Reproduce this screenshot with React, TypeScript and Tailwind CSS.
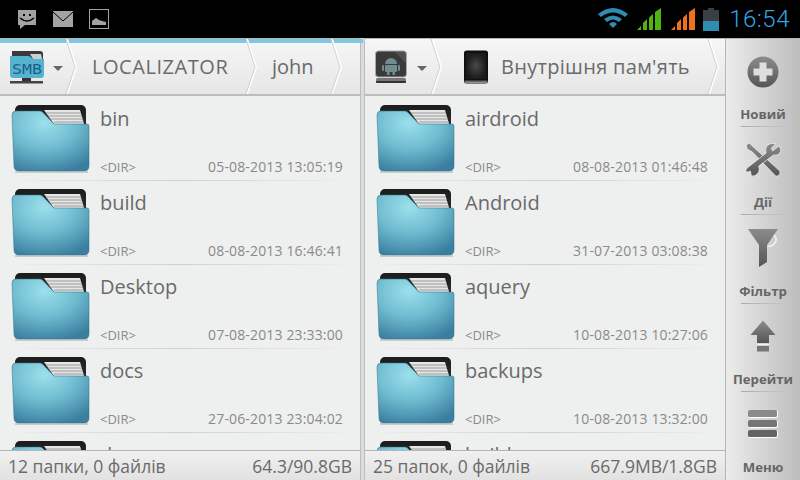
function Folder() {
  return (
    <svg width="80" height="72" viewBox="0 0 80 72" className="shrink-0">
      <defs>
        <linearGradient id="fback" x1="0" y1="0" x2="0" y2="1">
          <stop offset="0" stopColor="#1c1c1c" />
          <stop offset="1" stopColor="#3a3a3a" />
        </linearGradient>
        <radialGradient id="ffront" cx="0.42" cy="0.2" r="0.85">
          <stop offset="0" stopColor="#9ce0ec" />
          <stop offset="0.5" stopColor="#6fbcd0" />
          <stop offset="1" stopColor="#3b7fa0" />
        </radialGradient>
      </defs>
      <rect x="5" y="1" width="71" height="40" rx="5" fill="url(#fback)" />
      <path d="M34 6 L70 6 L74 20 L44 20 Z" fill="#e6e6e6" />
      <path d="M36 9 L71 9 M38 12 L72 12 M41 15 L73 15 M44 18 L74 18" stroke="#9a9a9a" strokeWidth="1" />
      <path d="M6 7 H30 Q32 7 33 8.500 L44 20 H77 Q79 20 79 22 V62 Q79 67 74 67 H9 Q4 67 4 62 L2 11 Q2 7 6 7 Z" fill="url(#ffront)" stroke="#2f6d88" strokeWidth="0.5" />
      <path d="M5 68 H78" stroke="#a4a9ab" strokeWidth="1" />
    </svg>
  );
}

function Chevron({ className }: { className: string }) {
  return (
    <svg width="12" height="56" viewBox="0 0 12 56" className={className}>
      <path d="M2 0 L11 28 L2 55" fill="none" stroke="#ffffff" strokeWidth="2" />
      <path d="M1 0 L10 28 L1 55" fill="none" stroke="#d0d0d0" strokeWidth="1" />
    </svg>
  );
}

function Caret() {
  return <div className="w-0 h-0 border-l-[5px] border-r-[5px] border-t-[5px] border-l-transparent border-r-transparent border-t-[#666]" />;
}

function SmbIcon() {
  return (
    <svg width="36" height="36" viewBox="0 0 36 36">
      <path d="M3 1 H31 Q34 1 34 4 V9 H3 Z" fill="#3a3a3a" />
      <path d="M21 4 H32 L33 9 H24 Z" fill="#cfcfcf" />
      <path d="M1 6 H20 L24 9 H35 V25 Q35 28 32 28 H4 Q1 28 1 25 Z" fill="#55b3d0" />
      <rect x="13" y="28" width="9" height="4" fill="#333" />
      <rect x="1" y="31" width="33" height="2.500" fill="#444" />
      <text x="3" y="24" fill="#1c5f86" fontSize="14" fontFamily="'DejaVu Sans Mono', monospace" textLength="30" lengthAdjust="spacingAndGlyphs">SMB</text>
    </svg>
  );
}

function AndroidIcon() {
  return (
    <svg width="32" height="34" viewBox="0 0 32 34">
      <rect x="0.500" y="1" width="31" height="26" rx="3" fill="#3a3a3a" stroke="#aaa" />
      <path d="M10 14 A6 6 0 0 1 22 14 Z" fill="#6f8d92" />
      <rect x="10" y="15" width="12" height="7" rx="1" fill="#6f8d92" />
      <rect x="7" y="15" width="2" height="6" rx="1" fill="#6f8d92" />
      <rect x="23" y="15" width="2" height="6" rx="1" fill="#6f8d92" />
      <rect x="12" y="22" width="2.500" height="3" fill="#6f8d92" />
      <rect x="17.500" y="22" width="2.500" height="3" fill="#6f8d92" />
      <path d="M20 2 H31 V13 Z" fill="#ffffff" fillOpacity="0.12" />
      <rect x="1" y="28" width="30" height="5" rx="1.500" fill="#777" />
      <rect x="1" y="31" width="30" height="2" rx="1" fill="#333" />
    </svg>
  );
}

function TabletIcon() {
  return (
    <svg width="26" height="34" viewBox="0 0 26 34">
      <defs>
        <radialGradient id="tabscreen">
          <stop offset="0" stopColor="#4a4a4a" />
          <stop offset="1" stopColor="#1a1a1a" />
        </radialGradient>
        <linearGradient id="tabbot" x1="0" y1="0" x2="0" y2="1">
          <stop offset="0" stopColor="#111" />
          <stop offset="1" stopColor="#aaa" />
        </linearGradient>
      </defs>
      <rect x="1" y="0.500" width="24" height="33" rx="2.500" fill="#0f0f0f" />
      <rect x="3" y="3" width="20" height="26" fill="url(#tabscreen)" />
      <rect x="1.500" y="29.500" width="23" height="3.500" rx="1.500" fill="url(#tabbot)" />
    </svg>
  );
}

type Row = { name: string; date: string };

function FileRow({ row }: { row: Row }) {
  return (
    <div className="relative flex h-[84px] shrink-0 pl-[10px] pr-[17px] pt-[7px]">
      <Folder />
      <div className="flex-1 min-w-0 ml-[10px] flex flex-col">
        <div className="mt-px text-[20px] leading-[28px] text-[#6a6a6a]">{row.name}</div>
        <div className="mt-auto mb-[6px] flex justify-between items-center text-[#8a8a8a] leading-[16px]">
          <span className="text-[13px]">&lt;DIR&gt;</span>
          <span className="text-[14px] tracking-[0.15px]">{row.date}</span>
        </div>
      </div>
      <div className="absolute bottom-0 left-2 right-2 h-px bg-gradient-to-r from-[#eeeeee] via-[#cfcfcf] to-[#eeeeee]" />
    </div>
  );
}

function Panel({ width, accent, crumbs, rows, left, right }: { width: string; accent: boolean; crumbs: React.ReactNode; rows: Row[]; left: string; right: string }) {
  return (
    <div className={`${width} shrink-0 flex flex-col h-full overflow-hidden`}>
      <div className="relative h-[58px] shrink-0 flex items-center bg-gradient-to-b from-[#f6f6f6] to-[#e6e6e6] border-b-2 border-[#bdbdbd] border-t border-t-[#b5b5b5]">
        {accent && <div className="absolute top-0 left-0 right-0 h-[4px] bg-[#7dc8e2]" />}
        {crumbs}
      </div>
      <div className="flex-1 min-h-0 overflow-hidden bg-[#eeefef] pt-px">
        {rows.map((r) => <FileRow key={r.name} row={r} />)}
      </div>
      <div className="h-[30px] shrink-0 flex items-center justify-between pl-2 pr-2 text-[17.5px] leading-[24px] text-[#6a6a6a] bg-gradient-to-b from-[#f0f0f0] to-[#e2e2e2] border-t border-[#b5b5b5]">
        <span>{left}</span>
        <span>{right}</span>
      </div>
    </div>
  );
}

function SideItem({ label, icon, last }: { label: string; icon: React.ReactNode; last?: boolean }) {
  return (
    <div className="relative flex-1 flex flex-col items-center justify-end pb-[3px]">
      <div className="flex-1 flex items-center justify-center">{icon}</div>
      <div className="text-[13.2px] leading-[20px] font-bold text-[#666] whitespace-nowrap">{label}</div>
      {!last && <div className="absolute bottom-0 left-[15px] right-[10px] h-px bg-gradient-to-r from-[#a8a8a8] to-transparent" />}
    </div>
  );
}

const grad = (id: string) => (
  <linearGradient id={id} x1="0" y1="0" x2="0" y2="1">
    <stop offset="0" stopColor="#8c8c8c" />
    <stop offset="1" stopColor="#555" />
  </linearGradient>
);

function Plus() {
  return (
    <svg width="32" height="32" viewBox="0 0 32 32">
      <defs>{grad("g1")}</defs>
      <circle cx="16" cy="16" r="15.500" fill="url(#g1)" />
      <path d="M12.500 6.500 H19.500 V12.500 H25.500 V19.500 H19.500 V25.500 H12.500 V19.500 H6.500 V12.500 H12.500 Z" fill="#dedede" />
    </svg>
  );
}
function Tools() {
  return (
    <svg width="38" height="36" viewBox="0 0 36 36" preserveAspectRatio="none">
      <defs>{grad("g2")}</defs>
      <path d="M2 3 L5 1 L10 6 L34 29 Q35 32 32 34 L30 34 L8 10 L3 7 Z" fill="url(#g2)" stroke="#fff" strokeWidth="0.6" />
      <path d="M33 4 L27 9 L26 6 L30 2 Q24 0 21 5 Q20 8 21 11 L3 26 Q0 30 4 30 L6 29 L7 34 Q11 35 14 30 Q15 27 14 24 L28 13 Q33 14 35 9 Q35 6 33 4 Z" fill="url(#g2)" stroke="#fff" strokeWidth="0.6" />
    </svg>
  );
}
function Funnel() {
  return (
    <svg width="32" height="40" viewBox="0 0 32 40">
      <defs>{grad("g3")}</defs>
      <path d="M1 1 H31 L20 17 V34 L12 39 V17 Z" fill="url(#g3)" />
      <path d="M27 7 Q32 12 26 17 Q22 19 21 18" fill="none" stroke="#f4f4f4" strokeWidth="1.500" />
    </svg>
  );
}
function Up() {
  return (
    <svg width="26" height="32" viewBox="0 0 26 32">
      <defs>{grad("g4")}</defs>
      <path d="M13 0.500 L25.500 15 H19 V23 H7 V15 H0.500 Z" fill="url(#g4)" />
      <rect x="7" y="26" width="12" height="5.500" fill="#777" />
      <path d="M7 24.500 H19" stroke="#f5f5f5" />
    </svg>
  );
}
function MenuIcon() {
  return (
    <div className="flex flex-col gap-[2px] w-[30px]">
      <div className="h-[8px] rounded-[2px] bg-[#8a8a8a] border-b border-r border-white" />
      <div className="h-[8px] rounded-[2px] bg-[#757575] border-b border-r border-white" />
      <div className="h-[8px] rounded-[2px] bg-[#646464] border-b border-r border-white" />
    </div>
  );
}

function StatusBar() {
  return (
    <div className="h-[38px] shrink-0 bg-black flex items-center pl-[17px] pr-[10px]">
      <svg width="20" height="21" viewBox="0 0 20 21">
        <path d="M1 1 H19 V16 H8 L3 20 V16 H1 Z" fill="#a3a3a3" />
        <rect x="6" y="5" width="2" height="2" fill="#000" />
        <rect x="12" y="5" width="2" height="2" fill="#000" />
        <path d="M3 9 Q10 15 17 9" stroke="#000" strokeWidth="1.500" fill="none" />
      </svg>
      <svg width="20" height="16" viewBox="0 0 20 16" className="ml-[16px]">
        <path d="M0 0 H20 V16 H0 Z" fill="#a3a3a3" />
        <path d="M0 1 L10 10 L20 1" stroke="#000" strokeWidth="1" fill="none" />
      </svg>
      <svg width="20" height="20" viewBox="0 0 20 20" className="ml-[16px] -mt-[1px]">
        <rect x="0.500" y="0.500" width="19" height="19" fill="none" stroke="#a3a3a3" />
        <path d="M3 16 L3 12 L7 9 L10 11 L13 12 L17 13 L17 16 Z" fill="#a3a3a3" />
      </svg>
      <div className="flex-1" />
      <svg width="32" height="24" viewBox="0 0 32 24" className="-mt-[4px]">
        <path d="M1 9 Q16 -3 31 9 L28 12 Q16 3 4 12 Z" fill="#2d8db4" />
        <path d="M7 14 Q16 7 25 14 L22 17 Q16 12 10 17 Z" fill="#2d8db4" />
        <path d="M12 19 Q16 15 20 19 L16 23 Z" fill="#2d8db4" />
      </svg>
      <svg width="25" height="23" viewBox="0 0 25 23" className="ml-[8px]">
        <path d="M0 22 L4 18 V22 Z M6 22 V15 L10 11 V22 Z M12 22 V9.500 L16 6 V22 Z M18 22 V4 L24 0 V22 Z" fill="#4fb311" />
      </svg>
      <svg width="25" height="23" viewBox="0 0 25 23" className="ml-[9px]">
        <path d="M0 22 L4 18 V22 Z M6 22 V15 L10 11 V22 Z M12 22 V9.500 L16 6 V22 Z M18 22 V4 L24 0 V22 Z" fill="#f26f1b" />
      </svg>
      <svg width="16" height="23" viewBox="0 0 16 23" className="ml-[7px]">
        <path d="M5 0 H11 V2 H16 V23 H0 V2 H5 Z" fill="#3b3f42" />
        <rect x="0" y="13" width="16" height="10" fill="#2f8db5" />
      </svg>
      <div className="ml-[10px] text-[24px] leading-[30px] text-[#33a6e0] tracking-[0.5px] font-light" style={{ fontFamily: "Roboto, sans-serif" }}>16:54</div>
    </div>
  );
}

export default function App() {
  const leftRows: Row[] = [
    { name: "bin", date: "05-08-2013 13:05:19" },
    { name: "build", date: "08-08-2013 16:46:41" },
    { name: "Desktop", date: "07-08-2013 23:33:00" },
    { name: "docs", date: "27-06-2013 23:04:02" },
    { name: "dw", date: "" },
  ];
  const rightRows: Row[] = [
    { name: "airdroid", date: "08-08-2013 01:46:48" },
    { name: "Android", date: "31-07-2013 03:08:38" },
    { name: "aquery", date: "10-08-2013 10:27:06" },
    { name: "backups", date: "10-08-2013 13:32:00" },
    { name: "build", date: "" },
  ];
  return (
    <div className="w-[800px] h-[480px] flex flex-col overflow-hidden bg-[#eeefef]" style={{ fontFamily: "'Open Sans', 'Noto Sans', sans-serif" }}>
      <StatusBar />
      <div className="flex-1 min-h-0 flex">
        <Panel
          width="w-[360px]"
          accent
          left="12 папки, 0 файлів"
          right="64.3/90.8GB"
          rows={leftRows}
          crumbs={
            <div className="relative flex items-center h-full w-full text-[#6a6a6a] text-[20px]">
              <div className="ml-[9px] mt-[2px]"><SmbIcon /></div>
              <div className="ml-[8px] mt-1"><Caret /></div>
              <Chevron className="ml-[2px] shrink-0" />
              <span className="ml-[15px] w-[153px] shrink-0 tracking-[0.55px]">LOCALIZATOR</span>
              <Chevron className="shrink-0" />
              <span className="ml-[15px] w-[58px] shrink-0">john</span>
              <Chevron className="shrink-0" />
            </div>
          }
        />
        <div className="w-[5px] shrink-0 bg-[#dcdcdc] border-x border-[#bcbcbc]">
          <div className="h-[4px] mt-px -ml-px mr-[1px] bg-[#7dc8e2]" />
        </div>
        <Panel
          width="w-[360px]"
          accent={false}
          left="25 папок, 0 файлів"
          right="667.9MB/1.8GB"
          rows={rightRows}
          crumbs={
            <div className="relative flex items-center h-full w-full text-[#6a6a6a] text-[20px]">
              <div className="ml-[10px] mt-[1px]"><AndroidIcon /></div>
              <div className="ml-[10px] mt-1"><Caret /></div>
              <Chevron className="ml-[3px] shrink-0" />
              <div className="ml-[21px] mt-[1px]"><TabletIcon /></div>
              <span className="ml-[12px] w-[206px] shrink-0 whitespace-nowrap tracking-[0.3px]">Внутрішня пам'ять</span>
              <Chevron className="shrink-0" />
            </div>
          }
        />
        <div className="flex-1 flex flex-col border-l border-[#b5b5b5] border-t border-t-[#b5b5b5] bg-gradient-to-r from-[#ececec] to-[#bdbdbd]">
          <SideItem label="Новий" icon={<Plus />} />
          <SideItem label="Дії" icon={<Tools />} />
          <SideItem label="Фільтр" icon={<Funnel />} />
          <SideItem label="Перейти" icon={<Up />} />
          <SideItem label="Меню" icon={<MenuIcon />} last />
        </div>
      </div>
    </div>
  );
}
